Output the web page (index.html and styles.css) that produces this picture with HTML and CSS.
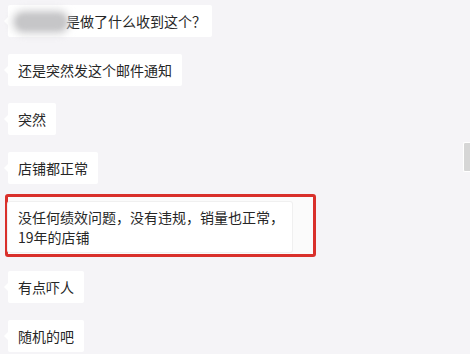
FILE: index.html
```html
<!DOCTYPE html>
<html lang="zh-CN">
<head>
    <meta charset="UTF-8">
    <meta name="viewport" content="width=device-width, initial-scale=1.0">
    <title>聊天记录</title>
    <link rel="stylesheet" href="styles.css">
</head>
<body>

    <div class="chat">
        <div class="bubble first">
            <span class="masked"></span>是做了什么收到这个？
        </div>
        <div class="bubble">还是突然发这个邮件通知</div>
        <div class="bubble">突然</div>
        <div class="bubble">店铺都正常</div>
        <div class="highlight">
            <div class="bubble">没任何绩效问题，没有违规，销量也正常，<br>19年的店铺</div>
        </div>
        <div class="bubble">有点吓人</div>
        <div class="bubble">随机的吧</div>
    </div>

    <div class="scrollbar"></div>

</body>
</html>
```

FILE: styles.css
```css
body {
    margin: 0;
    background-color: #f5f4f7;
    font-family: "Noto Sans CJK SC", "Noto Sans", sans-serif;
    font-size: 14px;
    color: #262626;
    overflow: hidden;
}
.chat {
    display: flex;
    flex-direction: column;
    align-items: flex-start;
    gap: 17px;
    padding: 5px 0 0 8px;
}
.bubble {
    position: relative;
    background-color: #fff;
    line-height: 18px;
    padding: 7px 10px;
    border-radius: 2px;
    white-space: nowrap;
}
.bubble::before {
    content: "";
    position: absolute;
    left: -4px;
    top: 12px;
    border-top: 4px solid transparent;
    border-bottom: 4px solid transparent;
    border-right: 4px solid #fff;
}
.first {
    padding-right: 6px;
}
.masked {
    display: inline-block;
    width: 50px;
    height: 16px;
    margin-left: -2px;
    vertical-align: -3px;
    background-color: #c6c6c8;
    box-shadow: 0 0 6px 4px #d2d2d4;
    border-radius: 8px;
    filter: blur(2px);
}
.highlight {
    margin: -7px 0 -3px -3px;
    padding: 5px 21px 2px 0;
    border: 3px solid #d9302b;
    border-radius: 3px;
    background-color: #fbfbfb;
}
.highlight .bubble {
    line-height: 20px;
    padding: 5px 8px 5px 10px;
    box-shadow: 0 0 0 1px #f0f0f0;
}
.highlight .bubble::before {
    display: none;
}
.scrollbar {
    position: absolute;
    right: 0;
    top: 142px;
    width: 6px;
    height: 28px;
    background-color: #d6d6d6;
    border: 1px solid #fff;
    border-right: none;
    border-radius: 2px 0 0 2px;
}
```
